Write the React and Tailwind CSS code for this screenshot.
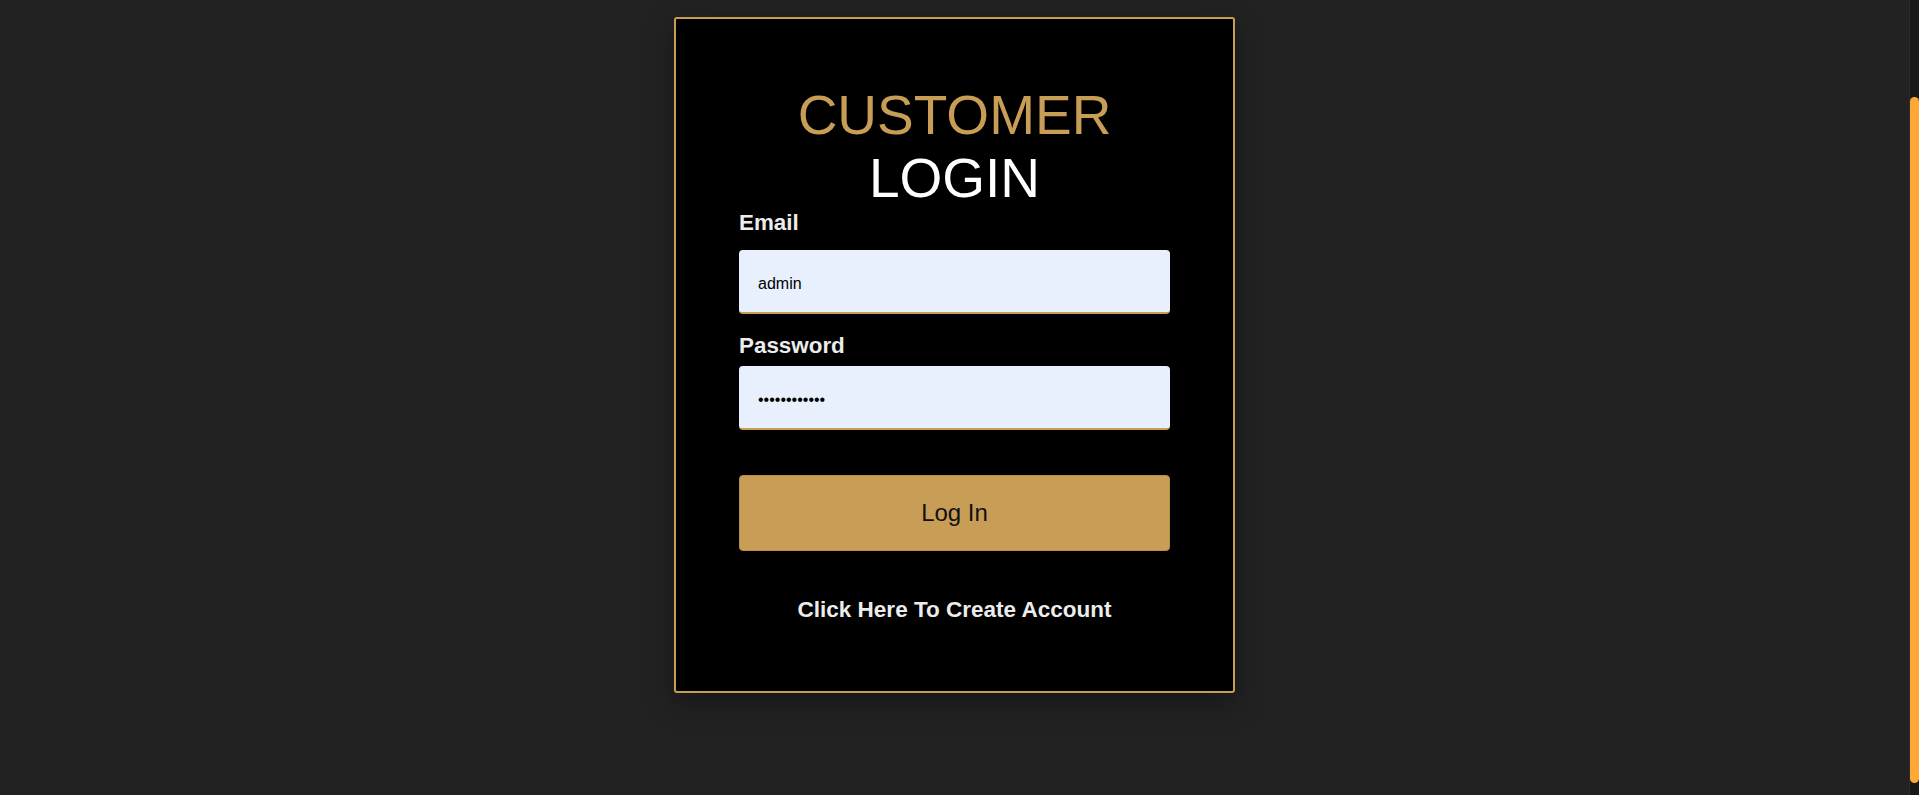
import React from 'react'

const fontStack = "font-['Liberation_Sans',Arial,sans-serif]"

function Field({ label, type, value, labelClassName }) {
  return (
    <>
      <label className={`block text-[22.4px] leading-[25px] font-bold text-[#ececec] ${labelClassName}`}>{label}</label>
      <input
        type={type}
        value={value}
        readOnly
        className={`block w-full h-[64px] pt-[6px] px-[19px] rounded-[4px] border-0 border-b-2 border-[#c89d55] bg-[#e8f0fe] text-[16px] text-black outline-none ${fontStack}`}
      />
    </>
  )
}

export default function App() {
  return (
    <div className={`flex h-screen w-full bg-[#222222] ${fontStack}`}>
      <main className="flex-1 min-w-0">
        <div className="mx-auto mt-[17px] w-[561px] rounded-[3px] border-2 border-[#c89d55] bg-black px-[63px] pt-[65px] pb-[69px] shadow-[0_10px_28px_rgba(0,0,0,0.35)]">
          <h1 className="text-center text-[55px] leading-[63px] font-normal">
            <span className="block text-[#c89d55]">CUSTOMER</span>
            <span className="block text-white">LOGIN</span>
          </h1>

          <Field label="Email" type="text" value="admin" labelClassName="mb-[15px]" />
          <Field label="Password" type="password" value="adminpass123" labelClassName="mt-[19px] mb-[8px]" />

          <button
            type="button"
            className="mt-[45px] block w-full h-[76px] rounded-[4px] border border-[#b98f4c] bg-[#c89d55] text-[24px] text-[#111] cursor-pointer"
          >
            Log In
          </button>

          <p className="mt-[46px] text-center text-[22.5px] leading-[25px] font-bold text-[#ececec]">
            Click Here To Create Account
          </p>
        </div>
      </main>

      <div className="w-[10px] shrink-0 border-l border-[#2c2c2c] bg-[#181818] pt-[97px]">
        <div className="h-[686px] w-[9px] rounded-full bg-[#ffa836]" />
      </div>
    </div>
  )
}
